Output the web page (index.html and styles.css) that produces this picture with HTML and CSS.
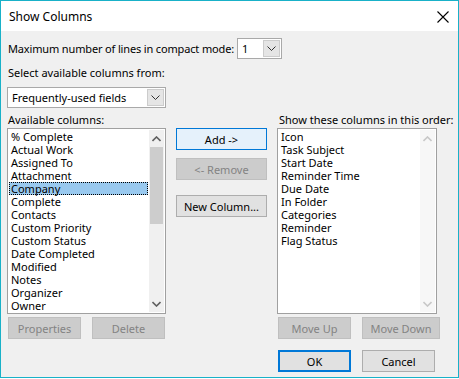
FILE: index.html
```html
<!DOCTYPE html>
<html lang="en">
<head>
    <meta charset="UTF-8">
    <title>Show Columns</title>
    <link rel="stylesheet" href="styles.css">
</head>
<body>

<div class="window">
    <div class="titlebar">
        <span class="title">Show Columns</span>
        <svg class="close" width="12" height="12" viewBox="0 0 12 12">
            <path d="M0.5 0.5 L11.5 11.5 M11.5 0.5 L0.5 11.5" stroke="#000" stroke-width="1.1" fill="none"/>
        </svg>
    </div>

    <div class="content">
        <div class="compact-row">
            <span class="compact-label">Maximum number of lines in compact mode:</span>
            <div class="combo combo-small">
                <span class="combo-text">1</span>
                <span class="combo-btn">
                    <svg width="9" height="5" viewBox="0 0 9 5"><path d="M0.5 0.5 L4.5 4.5 L8.5 0.5" stroke="#333" fill="none"/></svg>
                </span>
            </div>
        </div>

        <div class="label label-select">Select available columns from:</div>
        <div class="combo combo-wide">
            <span class="combo-text">Frequently-used fields</span>
            <span class="combo-btn">
                <svg width="9" height="5" viewBox="0 0 9 5"><path d="M0.5 0.5 L4.5 4.5 L8.5 0.5" stroke="#333" fill="none"/></svg>
            </span>
        </div>

        <div class="columns">
            <div class="col col-left">
                <div class="label">Available columns:</div>
                <div class="listbox">
                    <ul class="items">
                        <li>% Complete</li>
                        <li>Actual Work</li>
                        <li>Assigned To</li>
                        <li>Attachment</li>
                        <li class="selected">Company</li>
                        <li>Complete</li>
                        <li>Contacts</li>
                        <li>Custom Priority</li>
                        <li>Custom Status</li>
                        <li>Date Completed</li>
                        <li>Modified</li>
                        <li>Notes</li>
                        <li>Organizer</li>
                        <li>Owner</li>
                    </ul>
                    <div class="scrollbar">
                        <span class="arrow">
                            <svg width="9" height="6" viewBox="0 0 9 6"><path d="M0.5 5 L4.5 1 L8.5 5" stroke="#606060" stroke-width="1.6" fill="none"/></svg>
                        </span>
                        <div class="track"><div class="thumb"></div></div>
                        <span class="arrow">
                            <svg width="9" height="6" viewBox="0 0 9 6"><path d="M0.5 1 L4.5 5 L8.5 1" stroke="#606060" stroke-width="1.6" fill="none"/></svg>
                        </span>
                    </div>
                </div>
                <div class="btn-row">
                    <button class="btn" disabled>Properties</button>
                    <button class="btn" disabled>Delete</button>
                </div>
            </div>

            <div class="col col-mid">
                <button class="btn btn-default">Add -&gt;</button>
                <button class="btn btn-remove" disabled>&lt;- Remove</button>
                <button class="btn btn-new">New Column...</button>
            </div>

            <div class="col col-right">
                <div class="label">Show these columns in this order:</div>
                <div class="listbox listbox-right">
                    <ul class="items">
                        <li>Icon</li>
                        <li>Task Subject</li>
                        <li>Start Date</li>
                        <li>Reminder Time</li>
                        <li>Due Date</li>
                        <li>In Folder</li>
                        <li>Categories</li>
                        <li>Reminder</li>
                        <li>Flag Status</li>
                    </ul>
                    <div class="scrollbar scrollbar-off">
                        <span class="arrow">
                            <svg width="9" height="6" viewBox="0 0 9 6"><path d="M0.5 5 L4.5 1 L8.5 5" stroke="#c8c8c8" stroke-width="1.6" fill="none"/></svg>
                        </span>
                        <div class="track"></div>
                        <span class="arrow">
                            <svg width="9" height="6" viewBox="0 0 9 6"><path d="M0.5 1 L4.5 5 L8.5 1" stroke="#c8c8c8" stroke-width="1.6" fill="none"/></svg>
                        </span>
                    </div>
                </div>
                <div class="btn-row">
                    <button class="btn" disabled>Move Up</button>
                    <button class="btn btn-movedown" disabled>Move Down</button>
                </div>
                <div class="btn-row footer">
                    <button class="btn btn-ok">OK</button>
                    <button class="btn">Cancel</button>
                </div>
            </div>
        </div>
    </div>
</div>

</body>
</html>
```

FILE: styles.css
```css
body {
    margin: 0;
    background: #ffffff;
    font-family: "Noto Sans", "Open Sans", sans-serif;
    font-size: 11px;
    color: #000;
}
.window {
    width: 457px;
    height: 376px;
    border: 1px solid #19b1c8;
    background: #f0f0f0;
    display: flex;
    flex-direction: column;
}
.titlebar {
    height: 30px;
    background: #fff;
    display: flex;
    align-items: center;
    justify-content: space-between;
    padding: 0 9px 0 8px;
}
.title {
    font-size: 12px;
}
.close {
    margin-top: 1px;
}
.content {
    padding: 7px 0 0 6px;
}
.compact-row {
    display: flex;
    align-items: center;
    height: 21px;
}
.compact-label {
    width: 229px;
    padding-left: 1px;
    white-space: nowrap;
    letter-spacing: -0.15px;
}
.combo {
    height: 19px;
    border: 1px solid #a9a9a9;
    background: #fff;
    display: flex;
    align-items: center;
    justify-content: space-between;
    padding: 0 1px 0 4px;
}
.combo-small {
    width: 38px;
}
.combo-wide {
    width: 152px;
    margin-top: 6px;
}
.combo-btn {
    width: 15px;
    height: 15px;
    background: #e5e5e5;
    border: 1px solid #cccccc;
    display: flex;
    align-items: center;
    justify-content: center;
}
.label {
    height: 16px;
    line-height: 16px;
    padding-left: 1px;
    white-space: nowrap;
}
.label-select {
    margin-top: 6px;
}
.columns {
    display: flex;
    margin-top: 4px;
}
.col-left {
    width: 159px;
}
.col-mid {
    width: 91px;
    margin-left: 10px;
    padding-top: 16px;
    display: flex;
    flex-direction: column;
}
.col-right {
    width: 164px;
    margin-left: 10px;
}
.col-right .label {
    padding-left: 2px;
}
.listbox {
    border: 1px solid #a0a0a0;
    background: #fff;
    display: flex;
    justify-content: space-between;
    padding: 1px;
    box-sizing: border-box;
    height: 186px;
    width: 159px;
}
.listbox-right {
    width: 160px;
}
.items {
    list-style: none;
    margin: 0;
    padding: 0;
    flex: 1;
}
.items li {
    height: 13px;
    line-height: 13px;
    padding-left: 2px;
    white-space: nowrap;
}
.items li.selected {
    background: #99c9ef;
    outline: 1px dotted #000;
    outline-offset: -1px;
    margin-right: 1px;
}
.scrollbar {
    width: 15px;
    background: #f0f0f0;
    display: flex;
    flex-direction: column;
}
.scrollbar-off {
    background: #f7f7f7;
}
.arrow {
    height: 17px;
    display: flex;
    align-items: center;
    justify-content: center;
}
.track {
    flex: 1;
}
.thumb {
    height: 77px;
    background: #cdcdcd;
    margin: 0 1px;
}
.btn {
    font-family: inherit;
    font-size: 11px;
    height: 22px;
    width: 73px;
    padding: 0;
    background: #e1e1e1;
    border: 1px solid #adadad;
    color: #000;
}
.btn:disabled {
    background: #cccccc;
    border-color: #bfbfbf;
    color: #838383;
}
.btn-row {
    display: flex;
    justify-content: space-between;
    margin-top: 3px;
    padding-left: 1px;
}
.col-left .btn-row {
    width: 157px;
}
.col-right .btn-row {
    width: 162px;
}
.btn-movedown {
    width: 78px;
}
.col-mid .btn {
    width: 91px;
}
.btn-default {
    background: #e5f1fb;
    border-color: #0078d7;
}
.btn-remove {
    margin-top: 8px;
}
.btn-new {
    margin-top: 15px;
}
.footer {
    margin-top: 11px;
    width: 157px !important;
}
.btn-ok {
    border: 2px solid #0078d7;
}
```
